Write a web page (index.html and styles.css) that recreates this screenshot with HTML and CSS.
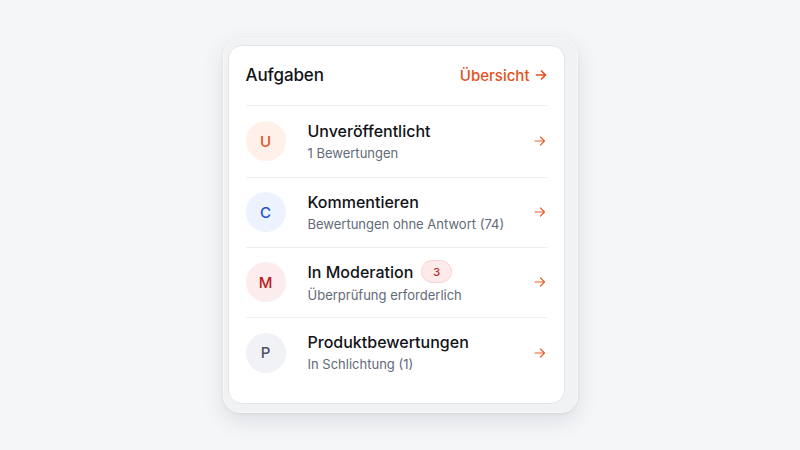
FILE: index.html
```html
<!DOCTYPE html>
<html lang="de">
<head>
<meta charset="utf-8">
<title>Aufgaben</title>
<link rel="stylesheet" href="styles.css">
</head>
<body>
<div class="frame">
  <section class="card">
    <header class="card-head">
      <h2 class="card-title">Aufgaben</h2>
      <a class="overview" href="#">Übersicht
        <svg class="head-arrow" viewBox="0 0 12 12" aria-hidden="true"><path d="M1.5 6h9M6.5 2l4 4-4 4"/></svg>
      </a>
    </header>
    <ul class="tasks">
      <li class="task">
        <span class="avatar av-orange">U</span>
        <div class="task-text">
          <div class="task-title">Unveröffentlicht</div>
          <div class="task-sub">1 Bewertungen</div>
        </div>
        <svg class="row-arrow" viewBox="0 0 12 12" aria-hidden="true"><path d="M1 6h9.5M6.5 2l4 4-4 4"/></svg>
      </li>
      <li class="task">
        <span class="avatar av-blue">C</span>
        <div class="task-text">
          <div class="task-title">Kommentieren</div>
          <div class="task-sub">Bewertungen ohne Antwort (74)</div>
        </div>
        <svg class="row-arrow" viewBox="0 0 12 12" aria-hidden="true"><path d="M1 6h9.5M6.5 2l4 4-4 4"/></svg>
      </li>
      <li class="task">
        <span class="avatar av-red">M</span>
        <div class="task-text">
          <div class="task-title">In Moderation <span class="badge">3</span></div>
          <div class="task-sub">Überprüfung erforderlich</div>
        </div>
        <svg class="row-arrow" viewBox="0 0 12 12" aria-hidden="true"><path d="M1 6h9.5M6.5 2l4 4-4 4"/></svg>
      </li>
      <li class="task">
        <span class="avatar av-gray">P</span>
        <div class="task-text">
          <div class="task-title">Produktbewertungen</div>
          <div class="task-sub">In Schlichtung (1)</div>
        </div>
        <svg class="row-arrow" viewBox="0 0 12 12" aria-hidden="true"><path d="M1 6h9.5M6.5 2l4 4-4 4"/></svg>
      </li>
    </ul>
  </section>
</div>
</body>
</html>
```
FILE: styles.css
```css
* { box-sizing: border-box; }
html, body { height: 100%; }
body {
  margin: 0;
  background: #f5f6f8;
  font-family: Inter, "Liberation Sans", sans-serif;
  display: flex;
  align-items: center;
  justify-content: center;
  color: #111318;
}
.frame {
  width: 355px;
  height: 375px;
  padding: 6px 12px 8px 4px;
  background: #f1f2f4;
  border: 1px solid #f8f8fa;
  border-radius: 17px;
  box-shadow: 0 8px 22px rgba(20, 24, 40, 0.10), 0 1px 3px rgba(20, 24, 40, 0.06);
}
.card {
  height: 100%;
  background: #ffffff;
  border: 1px solid #e3e5ea;
  border-radius: 14px;
  padding: 0 17px;
}
.card-head {
  height: 60px;
  display: flex;
  align-items: center;
  justify-content: space-between;
  border-bottom: 1px solid #eceef1;
}
.card-title {
  margin: 0;
  font-size: 17px;
  font-weight: 500;
  letter-spacing: -0.1px;
}
.overview {
  display: flex;
  align-items: center;
  gap: 5px;
  color: #e4521c;
  font-size: 15px;
  font-weight: 500;
  text-decoration: none;
}
.head-arrow {
  width: 12px;
  height: 12px;
  fill: none;
  stroke: #e4521c;
  stroke-width: 1.7;
  stroke-linecap: round;
  stroke-linejoin: round;
}
.tasks {
  list-style: none;
  margin: 0;
  padding: 0;
}
.task {
  display: flex;
  align-items: center;
  height: 70px;
  border-bottom: 1px solid #eceef1;
}
.task:first-child { height: 72px; }
.task:last-child { border-bottom: none; }
.avatar {
  width: 40px;
  height: 40px;
  border-radius: 50%;
  flex: none;
  display: flex;
  align-items: center;
  justify-content: center;
  font-size: 15px;
  font-weight: 500;
}
.av-orange { background: #fff1ea; color: #e4521c; }
.av-blue { background: #edf3fe; color: #2050d8; }
.av-red { background: #fdecee; color: #be1a1a; }
.av-gray { background: #f1f2f5; color: #4b5262; }
.task-text {
  flex: 1;
  margin-left: 22px;
  display: flex;
  flex-direction: column;
  gap: 3px;
}
.task-title {
  font-size: 16px;
  line-height: 20px;
  font-weight: 500;
  display: flex;
  align-items: center;
}
.task-sub {
  font-size: 13px;
  line-height: 18px;
  color: #626a78;
}
.badge {
  margin-left: 8px;
  min-width: 31px;
  height: 23px;
  padding: 0 8px;
  border-radius: 12px;
  background: #fdeaea;
  border: 1px solid #fbd0d0;
  color: #c2281f;
  font-size: 11px;
  font-weight: 500;
  display: inline-flex;
  align-items: center;
  justify-content: center;
}
.row-arrow {
  width: 12px;
  height: 12px;
  flex: none;
  margin-right: 1px;
  fill: none;
  stroke: #e8632f;
  stroke-width: 1.2;
  stroke-linecap: round;
  stroke-linejoin: round;
}
```
